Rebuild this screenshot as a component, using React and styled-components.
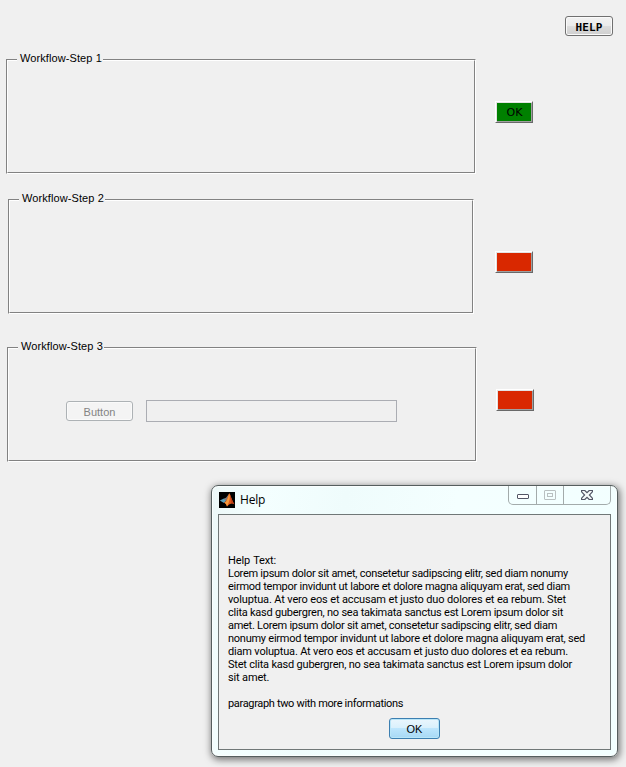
import React from "react";
import styled, { createGlobalStyle } from "styled-components";

const GlobalStyle = createGlobalStyle`
  * { box-sizing: border-box; }
  html, body { margin: 0; padding: 0; background: #f0f0f0; overflow: hidden; }
  button { margin: 0; padding: 0; font: inherit; }
`;

const Page = styled.main`
  position: relative;
  display: flex;
  flex-direction: column;
  width: 626px;
  height: 767px;
  padding-top: 16px;
  background: #f0f0f0;
  color: #000;
  font: 11px "Liberation Sans", Arial, sans-serif;
`;

const Toolbar = styled.header`
  display: flex;
  justify-content: flex-end;
  padding-right: 13px;
  height: 43px;
`;

const HelpButton = styled.button`
  width: 48px;
  height: 20px;
  border: 1px solid #707070;
  border-radius: 3px;
  box-shadow: inset 0 0 0 1px #fafafa;
  background: linear-gradient(#f2f2f2 0, #ebebeb 50%, #dddddd 50%, #cfcfcf 100%);
  && { font: bold 11px/19px "DejaVu Sans Mono", monospace; }
  letter-spacing: 0.15px;
  padding-top: 1px;
`;

const StepRow = styled.section`
  display: flex;
  align-items: flex-start;
  gap: ${(p) => p.$gap}px;
  height: 115px;
  margin: 0 0 ${(p) => p.$after}px ${(p) => p.$indent}px;
`;

const EtchedPanel = styled.div`
  width: ${(p) => p.$width}px;
  height: 115px;
  border: 1px solid;
  border-color: #828282 #fff #fff #828282;
`;

const EtchedInner = styled.div`
  height: 113px;
  border: 1px solid;
  border-color: #fff #828282 #828282 #fff;
`;

const PanelTitle = styled.h2`
  width: max-content;
  height: 13px;
  margin: -9px 0 0 9px;
  padding: 0 1px 0 3px;
  background: #f0f0f0;
  font-weight: 400;
  font-size: 11px;
  line-height: 13px;
  letter-spacing: 0.09px;
`;

const StatusButton = styled.button`
  width: 38px;
  height: 22px;
  margin-top: ${(p) => p.$top}px;
  border: 1px solid;
  border-color: #fff #696969 #696969 #fff;
  box-shadow: inset 1px 1px 0 #e3e3e3, inset -1px -1px 0 #a0a0a0;
  background: ${(p) => p.$color};
  color: #000;
  && { font: 11px/20px "DejaVu Sans", sans-serif; }
  padding: 1px 0 0 1px;
`;

const Controls = styled.div`
  display: flex;
  gap: 13px;
  padding: 47px 0 0 57px;
`;

const DisabledButton = styled.button`
  width: 67px;
  height: 20px;
  margin-top: 1px;
  border: 1px solid #adb2b5;
  border-radius: 3px;
  box-shadow: inset 0 0 0 1px #fafafa;
  background: #f4f4f4;
  color: #838383;
  padding-top: 2px;
`;

const Field = styled.input`
  width: 251px;
  height: 22px;
  border: 1px solid #abadb3;
  background: #f0f0f0;
`;

const Dialog = styled.div`
  position: absolute;
  left: 211px;
  top: 485px;
  width: 407px;
  height: 272px;
  padding: 0 6px;
  border: 1px solid #555e5e;
  border-radius: 7px;
  background: linear-gradient(100deg, #edf8f8 0, #f4ffff 12%, #effcfc 30%, #f4ffff 55%, #f2ffff 100%);
  box-shadow: inset 0 0 0 1px #fbffff, 1px 2px 7px 1px rgba(0, 0, 0, 0.5);
`;

const TitleBar = styled.div`
  display: flex;
  align-items: flex-start;
  height: 28px;
`;

const Logo = styled.svg`
  width: 16px;
  height: 16px;
  margin: 6px 5px 0 1px;
`;

const DialogTitle = styled.div`
  flex: 1;
  padding-top: 4px;
  font: 12px/20px "Open Sans", sans-serif;
  letter-spacing: -0.2px;
`;

const WindowButtons = styled.div`
  display: grid;
  grid-template-columns: 28px 27px 46px;
  width: 103px;
  height: 19px;
  border: 1px solid #a3abab;
  border-top: 0;
  border-radius: 0 0 5px 5px;
  overflow: hidden;
`;

const WindowButton = styled.button`
  display: grid;
  place-items: center;
  border: 0;
  border-right: ${(p) => (p.$last ? 0 : 1)}px solid #a3abab;
  background: transparent;
`;

const DialogBody = styled.div`
  display: flex;
  flex-direction: column;
  width: 393px;
  height: 236px;
  padding: 39px 0 0 9px;
  border: 1px solid #707777;
  background: #f0f0f0;
`;

const TextLine = styled.div`
  width: ${(p) => p.$width}px;
  height: 13px;
  white-space: nowrap;
  text-align: justify;
  text-align-last: justify;
  font: 11px/13px Roboto, sans-serif;
  letter-spacing: ${(p) => p.$track}px;
`;

const OkButton = styled.button`
  width: 51px;
  height: 21px;
  margin: 8px 0 0 161px;
  border: 1px solid #3c7fb1;
  border-radius: 3px;
  box-shadow: inset 0 0 0 1px #b9e6f8;
  background: linear-gradient(#eaf6fd 0, #d9f0fc 48%, #bee6fd 48%, #a7d9f5 100%);
`;

const lines = [
  ["Help Text:", 48, -0.15],
  ["Lorem ipsum dolor sit amet, consetetur sadipscing elitr, sed diam nonumy", 340, -0.29],
  ["eirmod tempor invidunt ut labore et dolore magna aliquyam erat, sed diam", 342, -0.27],
  ["voluptua. At vero eos et accusam et justo duo dolores et ea rebum. Stet", 338, -0.15],
  ["clita kasd gubergren, no sea takimata sanctus est Lorem ipsum dolor sit", 335, -0.24],
  ["amet. Lorem ipsum dolor sit amet, consetetur sadipscing elitr, sed diam", 329, -0.29],
  ["nonumy eirmod tempor invidunt ut labore et dolore magna aliquyam erat, sed", 357, -0.26],
  ["diam voluptua. At vero eos et accusam et justo duo dolores et ea rebum.", 340, -0.19],
  ["Stet clita kasd gubergren, no sea takimata sanctus est Lorem ipsum dolor", 344, -0.22],
  ["sit amet.", 38, -0.15],
  ["", 10, 0],
  ["paragraph two with more informations", 175, -0.34],
];

function Step({ title, width, indent, gap, after, color, label, statusTop, children }) {
  return (
    <StepRow $indent={indent} $gap={gap} $after={after}>
      <EtchedPanel $width={width}>
        <EtchedInner>
          <PanelTitle>{title}</PanelTitle>
          {children}
        </EtchedInner>
      </EtchedPanel>
      <StatusButton $color={color} $top={statusTop}>{label}</StatusButton>
    </StepRow>
  );
}

function MatlabLogo() {
  return (
    <Logo viewBox="0 0 16 16">
      <rect width="16" height="16" fill="#000" />
      <path d="M0.8 8.6 5 6.5 7.5 8.5 5 11Z" fill="#5aa0bd" />
      <path d="M5 6.5 7 5.8 10 2 9 7.2 7 9.2Z" fill="#7d7d80" />
      <path d="M4.8 10.8C8 9.6 8.5 4.5 10.3 1.3 11.6 2.5 13 9 15.4 12.2 12.8 10.5 10.5 11.8 8 14.6 7.4 12.5 6.5 11 4.8 10.8Z" fill="#e0591c" />
      <path d="M10.3 1.3C11.4 5 10.8 9 8 14.6 7.5 12.5 6.5 11.2 5.5 10.8 8.5 9.5 9 4.8 10.3 1.3Z" fill="#f59a3c" />
      <path d="M10.7 1.7C11.6 3.5 12.8 8.7 15.4 12.2L12.3 10.8Z" fill="#c23d17" />
    </Logo>
  );
}

export default function App() {
  return (
    <>
      <GlobalStyle />
      <Page>
        <Toolbar>
          <HelpButton>HELP</HelpButton>
        </Toolbar>
        <Step title="Workflow-Step 1" width={470} indent={6} gap={19} after={25} color="#008000" label="OK" statusTop={42} />
        <Step title="Workflow-Step 2" width={466} indent={8} gap={21} after={33} color="#d92800" statusTop={52} />
        <Step title="Workflow-Step 3" width={470} indent={7} gap={19} after={0} color="#d92800" statusTop={42}>
          <Controls>
            <DisabledButton disabled>Button</DisabledButton>
            <Field disabled />
          </Controls>
        </Step>
        <Dialog role="dialog">
          <TitleBar>
            <MatlabLogo />
            <DialogTitle>Help</DialogTitle>
            <WindowButtons>
              <WindowButton aria-label="Minimize">
                <svg width="14" height="14" viewBox="0 0 14 14">
                  <rect x="1.5" y="6.5" width="11" height="4" rx="0.5" fill="#fff" stroke="#535666" />
                </svg>
              </WindowButton>
              <WindowButton aria-label="Maximize" disabled>
                <svg width="12" height="10" viewBox="0 0 12 10">
                  <rect x="0.5" y="0.5" width="11" height="9" rx="0.5" fill="none" stroke="#b9c0c1" />
                  <rect x="3.5" y="3.5" width="5" height="3" fill="none" stroke="#b9c0c1" />
                </svg>
              </WindowButton>
              <WindowButton aria-label="Close" $last>
                <svg width="12" height="10" viewBox="0 0 12 10">
                  <path d="M.6.5H3.8L6 2.7 8.2.5H11.4V1.8L8.4 5 11.4 8.2V9.5H8.2L6 7.3 3.8 9.5H.6V8.2L3.6 5 .6 1.8Z" fill="#f8fcfc" stroke="#535666" strokeWidth="1.2" />
                </svg>
              </WindowButton>
            </WindowButtons>
          </TitleBar>
          <DialogBody>
            {lines.map(([text, width, track], i) => (
              <TextLine key={i} $width={width} $track={track}>{text}</TextLine>
            ))}
            <OkButton>OK</OkButton>
          </DialogBody>
        </Dialog>
      </Page>
    </>
  );
}
